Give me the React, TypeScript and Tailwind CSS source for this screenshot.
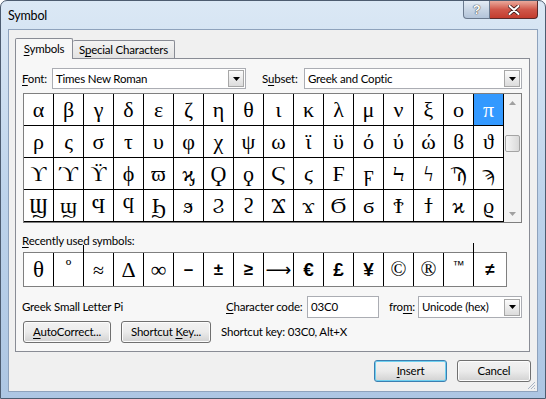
import React from 'react';

const GRID: string[][] = [
  'αβγδεζηθικλμνξοπ'.split(''),
  'ρςστυφχψωϊϋόύώϐϑ'.split(''),
  'ϒϓϔϕϖϗϘϙϚϛϜϝϞϟϠϡ'.split(''),
  'ϢϣϤϥϦϧϨϩϪϫϬϭϮϯϰϱ'.split(''),
];

const SERIF = "font-['Liberation_Serif','DejaVu_Serif',serif]";
const SANS_BOLD = "font-['Liberation_Sans',Arial,sans-serif] font-bold";

const RECENT: { ch: string; cls: string }[] = [
  { ch: 'θ', cls: `${SERIF} text-[23px]` },
  { ch: 'º', cls: `${SERIF} text-[18px] -mt-[8px]` },
  { ch: '≈', cls: `${SERIF} text-[20px]` },
  { ch: 'Δ', cls: `${SERIF} text-[22px]` },
  { ch: '∞', cls: `${SERIF} text-[22px]` },
  { ch: '–', cls: `${SANS_BOLD} text-[17px]` },
  { ch: '±', cls: `${SANS_BOLD} text-[17px]` },
  { ch: '≥', cls: `${SANS_BOLD} text-[17px]` },
  { ch: '⟶', cls: `font-['DejaVu_Sans',sans-serif] text-[18px]` },
  { ch: '€', cls: `${SANS_BOLD} text-[19px]` },
  { ch: '£', cls: `${SANS_BOLD} text-[19px]` },
  { ch: '¥', cls: `${SANS_BOLD} text-[19px]` },
  { ch: '©', cls: `${SERIF} text-[21px]` },
  { ch: '®', cls: `${SERIF} text-[21px]` },
  { ch: '™', cls: `font-['Liberation_Sans',Arial,sans-serif] text-[12px] -mt-[10px]` },
  { ch: '≠', cls: `${SANS_BOLD} text-[17px]` },
];

function DownTri({ color = '#000' }: { color?: string }) {
  return (
    <svg width="7" height="4" viewBox="0 0 7 4">
      <path d="M0 0h7L3.5 4z" fill={color} />
    </svg>
  );
}

function UpTri() {
  return (
    <svg width="7" height="4" viewBox="0 0 7 4">
      <path d="M0 4h7L3.5 0z" fill="#a0a0a0" />
    </svg>
  );
}

function Combo({ className, value }: { className: string; value: string }) {
  return (
    <div className={`flex h-[21px] items-center border border-[#abadb3] bg-white ${className}`}>
      <span className="flex-1 truncate pl-[3px]">{value}</span>
      <div className="mr-px flex h-[17px] w-[16px] items-center justify-center border border-[#a7a7a7] bg-gradient-to-b from-[#fbfbfb] to-[#dcdcdc]">
        <DownTri />
      </div>
    </div>
  );
}

function Btn({ className, children, focused }: { className: string; children: React.ReactNode; focused?: boolean }) {
  return (
    <div
      className={`flex h-[22px] items-center justify-center whitespace-nowrap rounded-[3px] border bg-gradient-to-b from-[#f2f2f2] via-[#ebebeb] to-[#d2d2d2] ${
        focused
          ? 'border-[#3c7fb1] shadow-[inset_0_0_0_1px_#6fd0f0]'
          : 'border-[#707070] shadow-[inset_0_0_0_1px_#fcfcfc]'
      } ${className}`}
    >
      {children}
    </div>
  );
}

function U({ children }: { children: React.ReactNode }) {
  return <span className="underline underline-offset-[2px]">{children}</span>;
}

export default function App() {
  return (
    <div className="flex h-[399px] w-[546px] flex-col overflow-hidden whitespace-nowrap rounded-t-[7px] border border-[#4d5c70] bg-gradient-to-b from-[#dbe8f5] via-[#bdd3eb] to-[#adc6e3] font-['Lato','Noto_Sans',sans-serif] text-[11.5px] tracking-[-0.2px] text-black">
      {/* caption */}
      <div className="flex h-[28px] items-start">
        <span className="mt-[6px] pl-[7px] text-[12.5px]">Symbol</span>
        <div className="ml-auto mr-[7px] flex">
          <div className="flex h-[18px] w-[27px] items-center justify-center rounded-bl-[4px] border border-t-0 border-[#6b7a8e] bg-gradient-to-b from-[#e4ecf5] via-[#c9d6e5] to-[#b3c4d9]">
            <span className="font-['Liberation_Sans',sans-serif] text-[13px] font-bold leading-none text-white [text-shadow:0_0_1px_#333,0_0_1px_#333]">?</span>
          </div>
          <div className="flex h-[18px] w-[48px] items-center justify-center rounded-br-[4px] border border-l-0 border-t-0 border-[#5a2a2a] bg-gradient-to-b from-[#e9a99c] via-[#d0574a] to-[#c33c2e]">
            <svg width="12" height="10" viewBox="0 0 12 10">
              <path d="M1.5 1l9 8M10.5 1l-9 8" stroke="#3a1a1a" strokeWidth="3.6" strokeLinecap="round" />
              <path d="M1.5 1l9 8M10.5 1l-9 8" stroke="#fff" strokeWidth="2" strokeLinecap="round" />
            </svg>
          </div>
        </div>
      </div>

      {/* client area */}
      <div className="relative mx-[7px] flex h-[363px] flex-col border border-[#8ea2bc] bg-[#f0f0f0]">
        {/* tabs */}
        <div className="relative z-10 -mb-px ml-[6px] mt-[8px] flex items-end">
          <div className="flex h-[21px] w-[58px] items-center justify-center rounded-t-[2px] border border-b-0 border-[#898c95] bg-[#f7f7f7]">
            <span><U>S</U>ymbols</span>
          </div>
          <div className="mb-px flex h-[18px] w-[102px] items-center justify-center rounded-t-[2px] border border-b-0 border-l-0 border-[#898c95] bg-gradient-to-b from-[#f3f3f3] to-[#e3e3e3]">
            <span>S<U>p</U>ecial Characters</span>
          </div>
        </div>

        {/* tab page */}
        <div className="ml-[6px] flex h-[294px] w-[515px] flex-col border border-[#898c95] bg-[#f7f7f7]">
          {/* font / subset row */}
          <div className="mt-[9px] flex items-center pl-[6px]">
            <span className="w-[30px]"><U>F</U>ont:</span>
            <Combo className="w-[194px]" value="Times New Roman" />
            <span className="ml-[16px] w-[42px]">S<U>u</U>bset:</span>
            <Combo className="w-[218px]" value="Greek and Coptic" />
          </div>

          {/* symbol grid */}
          <div className="ml-[7px] mt-[4px] flex w-[499px] border border-[#7f7f7f] bg-white">
            <div className="grid w-[480px] grid-cols-16">
              {GRID.flat().map((ch, i) => {
                const sel = i === 15;
                return (
                  <div
                    key={i}
                    className={`flex h-[32px] items-center justify-center border-b border-r border-black ${SERIF} text-[22px] leading-none tracking-normal ${
                      sel ? 'bg-[#3399ff] text-white' : 'text-black'
                    }`}
                  >
                    {ch}
                  </div>
                );
              })}
            </div>
            {/* scrollbar */}
            <div className="flex w-[17px] flex-col bg-[#f3f3f3]">
              <div className="flex h-[17px] items-center justify-center">
                <UpTri />
              </div>
              <div className="h-[24px]" />
              <div className="mx-px h-[17px] rounded-[2px] border border-[#a4a4a4] bg-gradient-to-r from-[#f6f6f6] to-[#d9d9d9]" />
              <div className="flex-1" />
              <div className="flex h-[17px] items-center justify-center">
                <DownTri color="#a0a0a0" />
              </div>
            </div>
          </div>

          {/* recently used */}
          <div className="mt-[10px] pl-[6px] leading-[16px]">
            <U>R</U>ecently used symbols:
          </div>
          <div className="ml-[7px] mt-[3px] flex h-[35px] w-[484px] border border-[#7f7f7f] bg-white tracking-normal">
            {RECENT.map((r, i) => (
              <div
                key={i}
                className={`flex items-center justify-center leading-none ${
                  i < RECENT.length - 1 ? 'w-[30px] border-r border-black' : 'flex-1'
                } ${r.cls}`}
              >
                {r.ch}
              </div>
            ))}
          </div>

          {/* character info */}
          <div className="mt-[9px] flex items-center pl-[6px]">
            <span className="w-[204px]">Greek Small Letter Pi</span>
            <span className="w-[81px]"><U>C</U>haracter code:</span>
            <div className="flex h-[22px] w-[72px] items-center border border-[#abadb3] bg-white pl-[3px]">03C0</div>
            <span className="ml-[10px] w-[29px]">fro<U>m</U>:</span>
            <Combo className="h-[22px] w-[104px]" value="Unicode (hex)" />
          </div>

          {/* buttons */}
          <div className="mt-[3px] flex items-center pl-[7px]">
            <Btn className="w-[88px]"><span><U>A</U>utoCorrect...</span></Btn>
            <Btn className="ml-[10px] w-[90px]"><span>Shortcut <U>K</U>ey...</span></Btn>
            <span className="ml-[10px]">Shortcut key: 03C0, Alt+X</span>
          </div>
        </div>

        {/* dialog buttons */}
        <div className="mr-[6px] mt-[8px] flex justify-end">
          <Btn className="w-[73px]" focused><span><U>I</U>nsert</span></Btn>
          <Btn className="ml-[10px] w-[74px]">Cancel</Btn>
        </div>

        {/* size grip */}
        <svg className="absolute bottom-[1px] right-[1px]" width="10" height="10" viewBox="0 0 10 10">
          <path d="M9 2L2 9M9 5L5 9M9 8L8 9" stroke="#a8b4c4" strokeWidth="1" />
        </svg>
      </div>
    </div>
  );
}
